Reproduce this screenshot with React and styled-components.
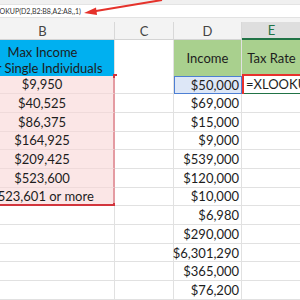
import styled, { createGlobalStyle, css } from 'styled-components'

const GlobalStyle = createGlobalStyle`
  body {
    margin: 0;
    background: #ffffff;
    overflow: hidden;
    font-family: Lato, "Open Sans", sans-serif;
  }
`

const FORMULA = '=XLOOKUP(D2,B2:B8,A2:A8,,1)'
const COLS = '144px 59px 68px 60px'

const brackets = ['$9,950', '$40,525', '$86,375', '$164,925', '$209,425', '$523,600', '$523,601 or more']
const incomes = ['$50,000', '$69,000', '$15,000', '$9,000', '$539,000', '$120,000', '$10,000', '$6,980', '$290,000', '$6,301,290', '$365,000', '$76,200']

export default function App() {
    return (
        <>
            <GlobalStyle />
            <Page>
                <TopStrip />
                <FormulaBar>
                    <FormulaText>{FORMULA}</FormulaText>
                </FormulaBar>
                <Spacer />
                <Sheet>
                    <ColHeaders>
                        <ColHeader>B</ColHeader>
                        <ColHeader>C</ColHeader>
                        <ColHeader>D</ColHeader>
                        <ColHeader $active>E</ColHeader>
                    </ColHeaders>
                    <Grid>
                        <Cell $tall $fill="#00b0f0" $align="center" $valign="flex-end">
                            <HeaderText>Max Income<br />For Single Individuals</HeaderText>
                        </Cell>
                        <Cell $tall />
                        <Cell $tall $fill="#a9d08e" $align="center">Income</Cell>
                        <Cell $tall $fill="#a9d08e" $align="center">Tax Rate</Cell>

                        {incomes.map((income, i) => (
                            <Row key={i}>
                                <Cell
                                    $align="center"
                                    $range={i < brackets.length}
                                    $rangeEnd={i === brackets.length - 1}
                                >
                                    {brackets[i]}
                                    {i === 0 && <Handle $top />}
                                    {i === brackets.length - 1 && <Handle />}
                                </Cell>
                                <Cell />
                                <Cell $align="flex-end" $picked={i === 0}>{income}</Cell>
                                <Cell $active={i === 0}>{i === 0 && <Overflow>{FORMULA}</Overflow>}</Cell>
                            </Row>
                        ))}
                    </Grid>
                </Sheet>
                <Arrow viewBox="0 0 300 30" width="300" height="30">
                    <line x1="162" y1="0" x2="93" y2="11.5" stroke="#e5322b" strokeWidth="2" />
                    <polygon points="84,13 96,7.5 97,15" fill="#e5322b" />
                </Arrow>
            </Page>
        </>
    )
}

const Page = styled.div`
    position: relative;
    width: 300px;
    height: 300px;
    overflow: hidden;
    background: #ffffff;
`
const TopStrip = styled.div`
    height: 4px;
    background: #f0f0f0;
    border-bottom: 1px solid #e4e4e4;
`
const FormulaBar = styled.div`
    height: 12px;
    display: flex;
    align-items: center;
    background: #ffffff;
    border-bottom: 1px solid #e2e2e2;
`
const FormulaText = styled.span`
    margin-left: -18px;
    font-size: 7px;
    color: #333333;
    white-space: nowrap;
`
const Spacer = styled.div`
    height: 4px;
    background: #f3f3f3;
`
const Sheet = styled.div`
    margin-left: -29px;
`
const ColHeaders = styled.div`
    display: grid;
    grid-template-columns: ${COLS};
    height: 18px;
    background: #f3f3f3;
`
const ColHeader = styled.div`
    display: flex;
    align-items: center;
    justify-content: center;
    box-sizing: border-box;
    border-right: 1px solid #d8d8d8;
    border-bottom: 1px solid #d4d4d4;
    font-size: 13px;
    color: #444444;
    ${p => p.$active && css`
        background: #dedede;
        color: #217346;
        border-bottom: 2px solid #217346;
    `}
`
const Grid = styled.div`
    display: grid;
    grid-template-columns: ${COLS};
    grid-template-rows: 35.5px;
    grid-auto-rows: 18.7px;
`
const Row = styled.div`
    display: contents;
`
const Cell = styled.div`
    position: relative;
    box-sizing: border-box;
    display: flex;
    align-items: ${p => p.$valign || 'center'};
    justify-content: ${p => p.$align || 'flex-start'};
    padding: 0 2px;
    border-right: 1px solid #e1e1e1;
    border-bottom: 1px solid #e1e1e1;
    background: ${p => p.$fill || '#ffffff'};
    font-size: 13px;
    color: #1d1d1d;
    white-space: nowrap;
    ${p => p.$tall && css`
        border-bottom: none;
    `}
    ${p => p.$range && css`
        background: #fbe6e6;
        border-bottom-color: #efdada;
        border-right: 2px solid #e49ba2;
    `}
    ${p => p.$rangeEnd && css`
        border-bottom: 2px solid #d2353d;
    `}
    ${p => p.$picked && css`
        background: #dde7f7;
        border: 1px solid #4d7fd3;
    `}
    ${p => p.$active && css`
        border-left: 1px solid #217346;
        border-bottom: 1px solid #217346;
        &::after {
            content: '';
            position: absolute;
            left: -1px;
            top: -1.5px;
            right: -6px;
            bottom: -5px;
            border: 2px solid #e8302c;
        }
    `}
`
const HeaderText = styled.span`
    line-height: 16px;
    text-align: center;
`
const Overflow = styled.span`
    position: absolute;
    left: 3px;
    font-size: 13px;
`
const Handle = styled.span`
    position: absolute;
    right: -3.5px;
    ${p => p.$top ? 'top: -2px;' : 'bottom: -3px;'}
    width: 4px;
    height: 4px;
    background: #d2353d;
`
const Arrow = styled.svg`
    position: absolute;
    left: 0;
    top: 0;
    pointer-events: none;
`
